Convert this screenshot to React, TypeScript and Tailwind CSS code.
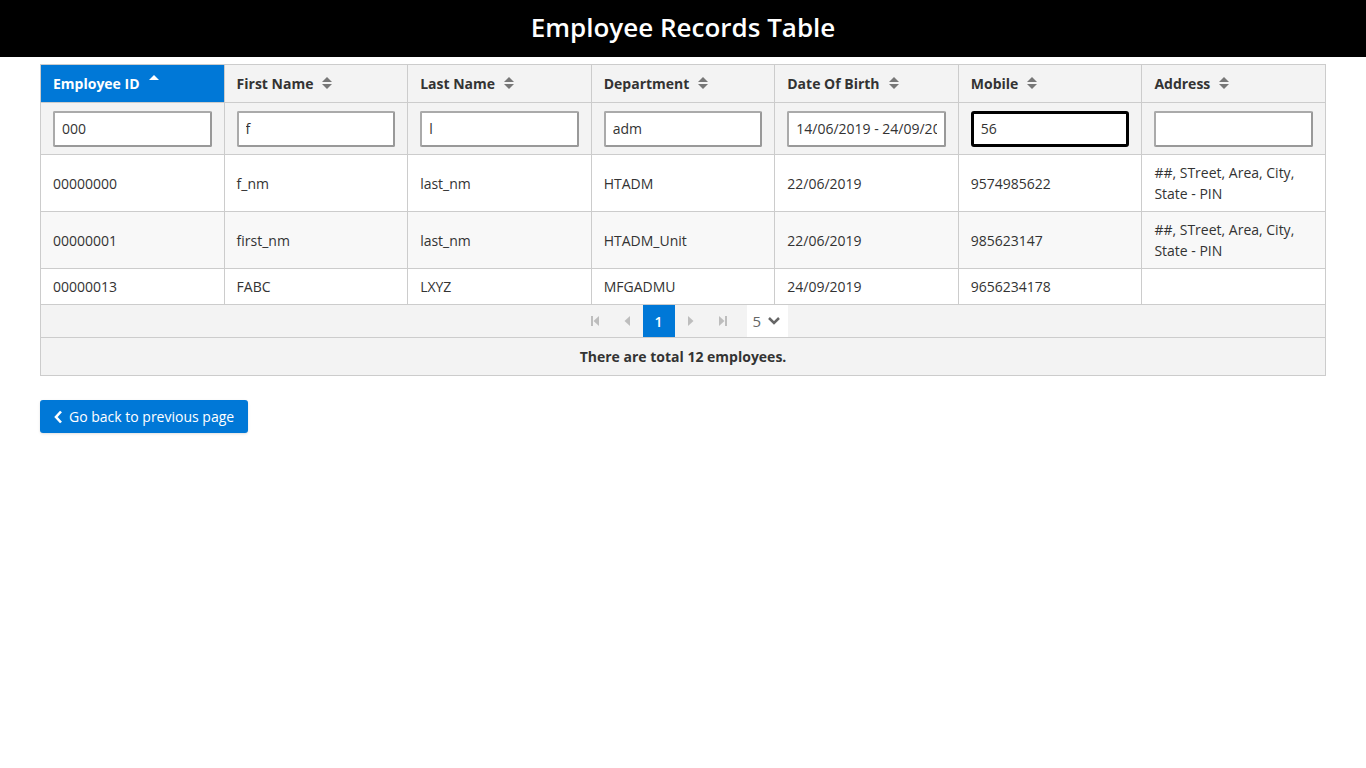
import React from "react";

const font = { fontFamily: '"Open Sans", "Noto Sans", sans-serif' };

const columns = ["Employee ID", "First Name", "Last Name", "Department", "Date Of Birth", "Mobile", "Address"];
const filters = ["000", "f", "l", "adm", "14/06/2019 - 24/09/2019", "56", ""];

const rows = [
	["00000000", "f_nm", "last_nm", "HTADM", "22/06/2019", "9574985622", "##, STreet, Area, City, State - PIN"],
	["00000001", "first_nm", "last_nm", "HTADM_Unit", "22/06/2019", "985623147", "##, STreet, Area, City, State - PIN"],
	["00000013", "FABC", "LXYZ", "MFGADMU", "24/09/2019", "9656234178", ""],
];

function SortIcon({ active }: { active?: boolean }) {
	if (active) {
		return (
			<svg width="12" height="14" viewBox="0 0 12 14" className="ml-2 -mt-2 inline-block">
				<path d="M1 8 L6 3 L11 8 Z" fill="#ffffff" />
			</svg>
		);
	}
	return (
		<svg width="12" height="16" viewBox="0 0 12 16" className="ml-2 inline-block">
			<path d="M1 7 L6 2 L11 7 Z" fill="#777777" />
			<path d="M1 9 L6 14 L11 9 Z" fill="#777777" />
		</svg>
	);
}

function PagerIcon({ kind }: { kind: "first" | "prev" | "next" | "last" }) {
	const c = "#bdbdbd";
	return (
		<svg width="10" height="12" viewBox="0 0 10 12">
			{kind === "first" && (
				<>
					<rect x="1" y="1" width="2" height="10" fill={c} />
					<path d="M9 1 L3.5 6 L9 11 Z" fill={c} />
				</>
			)}
			{kind === "prev" && <path d="M8 1 L2.5 6 L8 11 Z" fill={c} />}
			{kind === "next" && <path d="M2 1 L7.5 6 L2 11 Z" fill={c} />}
			{kind === "last" && (
				<>
					<path d="M1 1 L6.5 6 L1 11 Z" fill={c} />
					<rect x="7" y="1" width="2" height="10" fill={c} />
				</>
			)}
		</svg>
	);
}

export default function App() {
	return (
		<div className="min-h-screen bg-white text-[#333]" style={font}>
			<header className="h-[57px] bg-black flex items-center justify-center pb-[3px]">
				<h1 className="text-white text-[26px] font-semibold">Employee Records Table</h1>
			</header>

			<div className="px-10 pt-[7px]">
				<table className="w-full table-fixed border-collapse border border-[#cccccc] text-[14px]">
					<thead>
						<tr className="h-[38px]">
							{columns.map((c, i) => (
								<th
									key={c}
									className={`border border-[#cccccc] text-left font-bold px-[12px] pb-[1px] ${
										i === 0 ? "bg-[#0078d7] text-white" : "bg-[#f3f3f3] text-[#333]"
									}`}>
									<span className="inline-flex items-center">
										{c}
										<SortIcon active={i === 0} />
									</span>
								</th>
							))}
						</tr>
						<tr className="h-[52px] bg-[#f3f3f3]">
							{filters.map((f, i) => (
								<th key={i} className="border border-[#cccccc] px-[12px] font-normal">
									<input
										readOnly
										value={f}
										className={`w-full h-[36px] bg-white px-[7px] text-[14px] text-[#333] rounded-[2px] outline-none ${
											i === 5
												? "border-[3px] border-black rounded-[3px]"
												: "border-2 border-t-[#aaaaaa] border-l-[#aaaaaa] border-r-[#999999] border-b-[#999999]"
										}`}
										style={font}
									/>
								</th>
							))}
						</tr>
					</thead>
					<tbody>
						{rows.map((r, ri) => (
							<tr key={ri} className={`${ri === 1 ? "bg-[#f8f8f8]" : "bg-white"} ${ri === 2 ? "h-[36px]" : "h-[57px]"}`}>
								{r.map((v, ci) => (
									<td key={ci} className="border border-[#cccccc] px-[12px] leading-[21px] align-middle">
										{v}
									</td>
								))}
							</tr>
						))}
						<tr className="bg-[#f3f3f3] h-[33px]">
							<td colSpan={7} className="border border-[#cccccc] p-0">
								<div className="flex items-center justify-center h-[32px]">
									<div className="w-[32px] h-[32px] flex items-center justify-center"><PagerIcon kind="first" /></div>
									<div className="w-[32px] h-[32px] flex items-center justify-center"><PagerIcon kind="prev" /></div>
									<div className="w-[32px] h-[32px] flex items-center justify-center bg-[#0078d7] text-white font-semibold">1</div>
									<div className="w-[32px] h-[32px] flex items-center justify-center"><PagerIcon kind="next" /></div>
									<div className="w-[32px] h-[32px] flex items-center justify-center"><PagerIcon kind="last" /></div>
									<div className="ml-[8px] h-[32px] w-[41px] bg-white flex items-center pl-[6px] gap-[6px] text-[#666] text-[15px]">
										5
										<svg width="14" height="10" viewBox="0 0 14 10">
											<path d="M2 2 L7 7 L12 2" stroke="#666" strokeWidth="2.5" fill="none" />
										</svg>
									</div>
								</div>
							</td>
						</tr>
						<tr className="bg-[#f3f3f3] h-[38px]">
							<td colSpan={7} className="border border-[#cccccc] text-center font-bold">
								There are total 12 employees.
							</td>
						</tr>
					</tbody>
				</table>

				<button className="mt-[24px] h-[33px] px-[14px] bg-[#0078d7] text-white text-[14px] rounded-[3px] inline-flex items-center gap-[6px] shadow-sm">
					<svg width="9" height="14" viewBox="0 0 9 14">
						<path d="M7 1.5 L2 7 L7 12.5" stroke="#fff" strokeWidth="2.6" fill="none" />
					</svg>
					Go back to previous page
				</button>
			</div>
		</div>
	);
}
